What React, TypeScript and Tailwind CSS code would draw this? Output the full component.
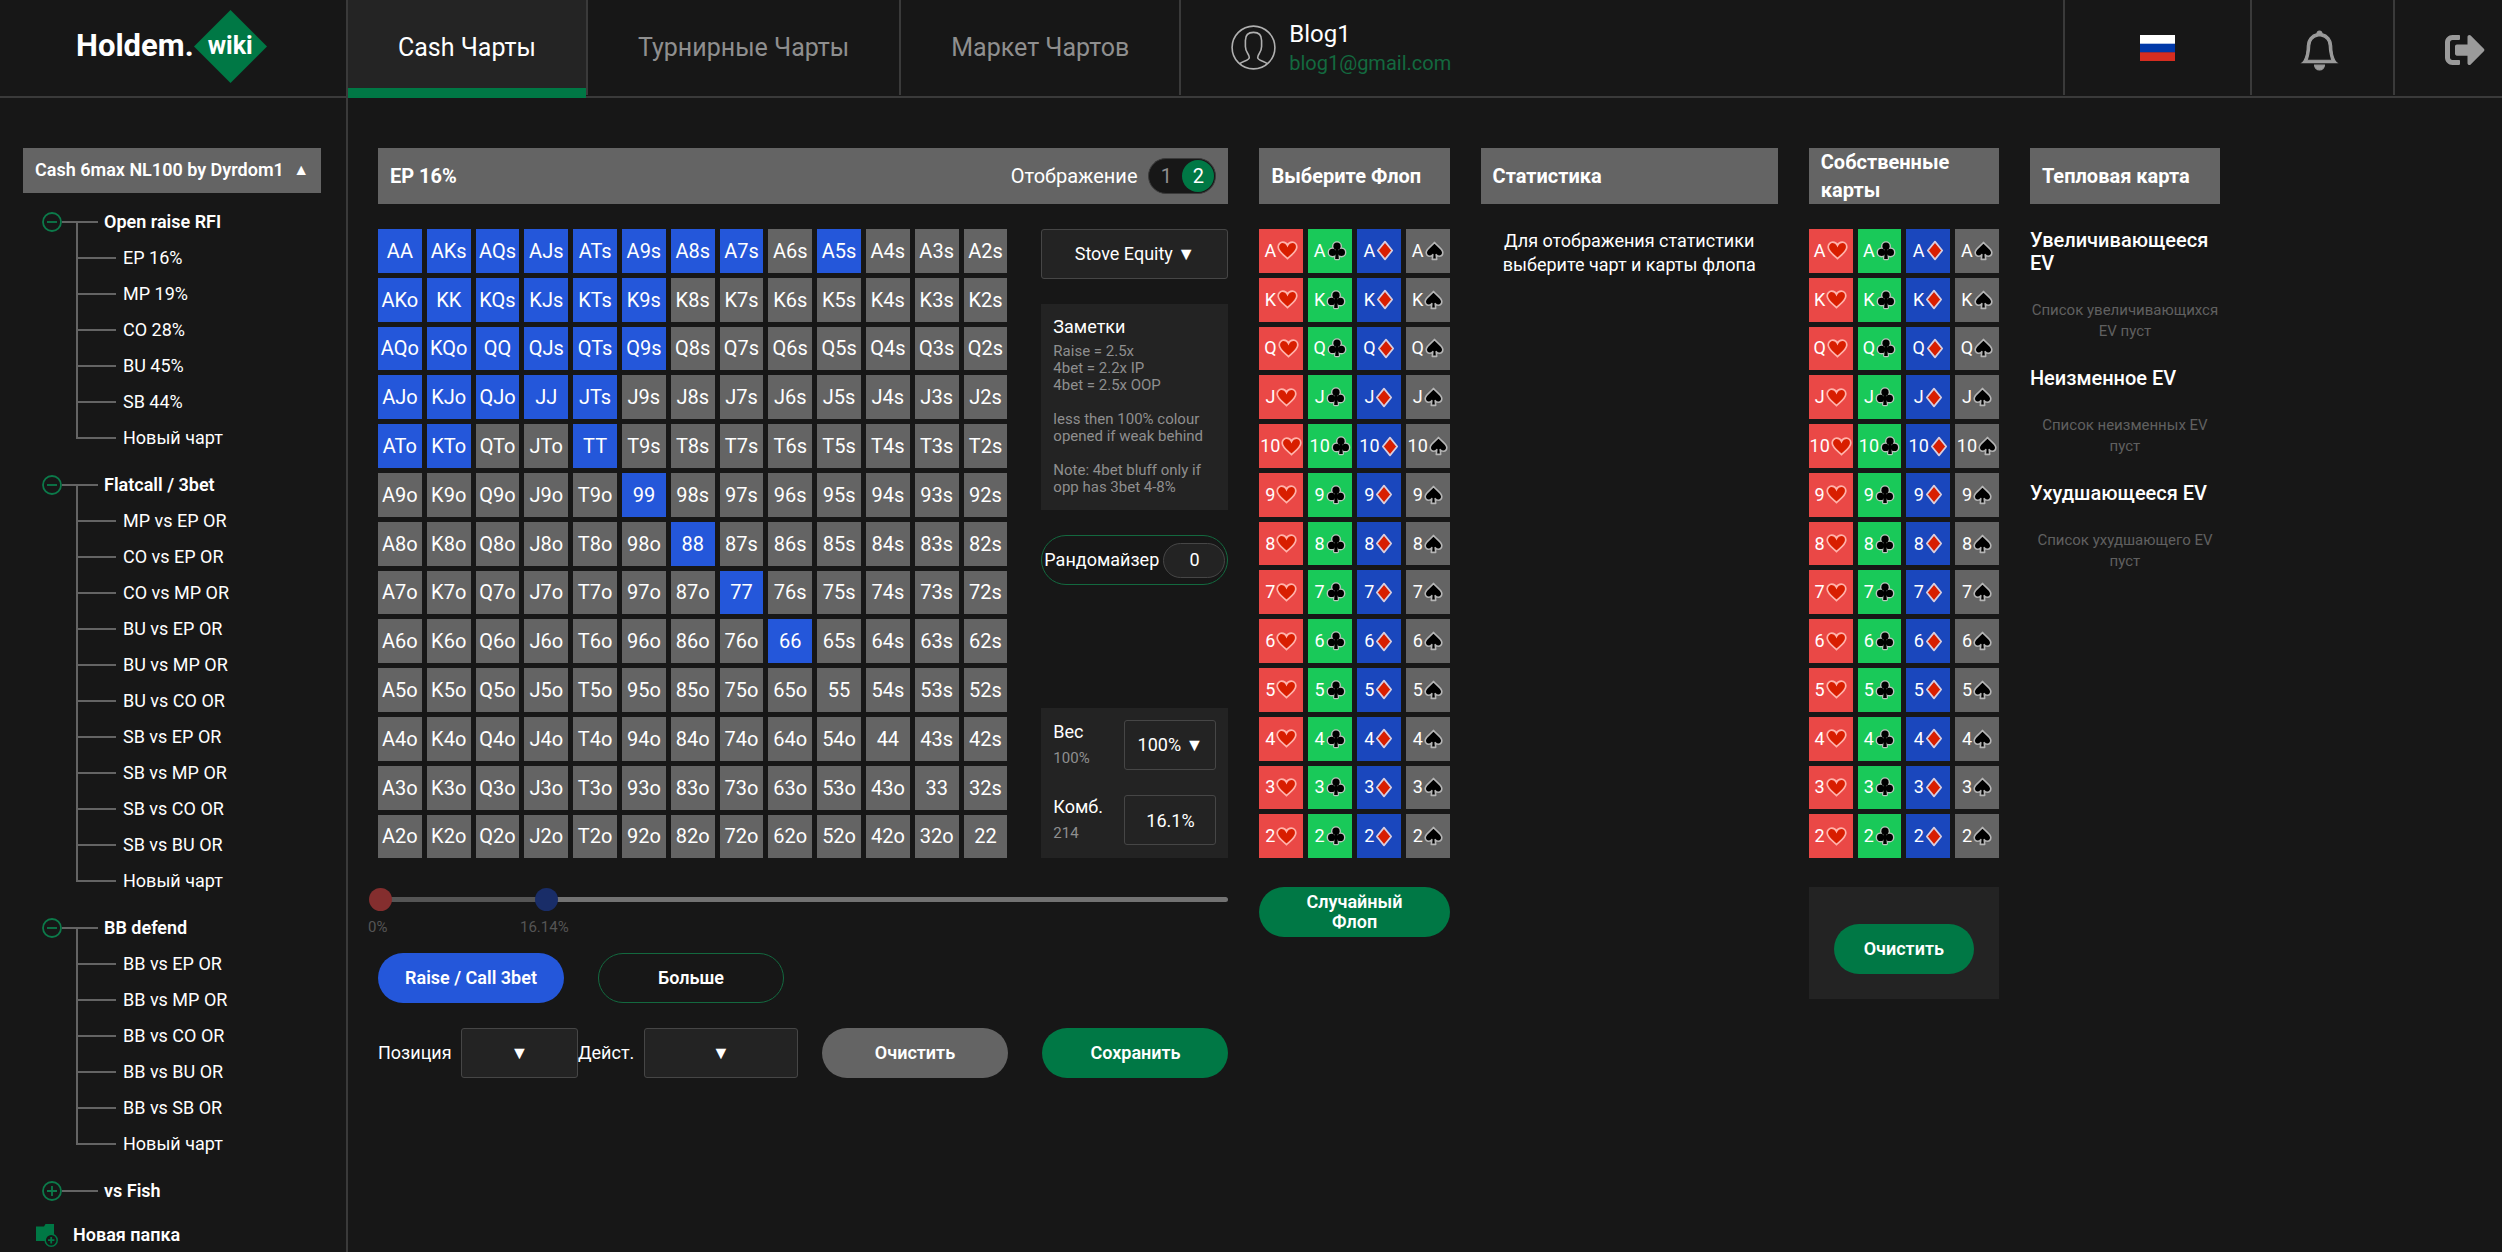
import { useState } from "react";
import { BsBell } from "react-icons/bs";
import { FaSignOutAlt } from "react-icons/fa";

const RANKS = ["A", "K", "Q", "J", "T", "9", "8", "7", "6", "5", "4", "3", "2"];

const RAISED = new Set([
  "AA", "AKs", "AQs", "AJs", "ATs", "A9s", "A8s", "A7s", "A5s",
  "AKo", "KK", "KQs", "KJs", "KTs", "K9s",
  "AQo", "KQo", "QQ", "QJs", "QTs", "Q9s",
  "AJo", "KJo", "QJo", "JJ", "JTs",
  "ATo", "KTo", "TT", "99", "88", "77", "66",
]);

const HANDS = RANKS.flatMap((_, row) =>
  RANKS.map((_, col) => {
    if (row === col) return RANKS[row] + RANKS[col];
    return row < col ? `${RANKS[row]}${RANKS[col]}s` : `${RANKS[col]}${RANKS[row]}o`;
  }),
);

const FOLDERS = [
  { name: "Open raise RFI", charts: ["EP 16%", "MP 19%", "CO 28%", "BU 45%", "SB 44%", "Новый чарт"] },
  {
    name: "Flatcall / 3bet",
    charts: [
      "MP vs EP OR", "CO vs EP OR", "CO vs MP OR", "BU vs EP OR", "BU vs MP OR", "BU vs CO OR",
      "SB vs EP OR", "SB vs MP OR", "SB vs CO OR", "SB vs BU OR", "Новый чарт",
    ],
  },
  {
    name: "BB defend",
    charts: ["BB vs EP OR", "BB vs MP OR", "BB vs CO OR", "BB vs BU OR", "BB vs SB OR", "Новый чарт"],
  },
  { name: "vs Fish", charts: [] as string[] },
];

function Heart() {
  return (
    <svg width="21" height="19" viewBox="0 0 21 19" aria-hidden="true">
      <path
        d="M10.5 17.6C8 15.2 1.2 10.6 1.2 6C1.2 3.2 3.2 1.2 5.7 1.2C7.9 1.2 9.7 2.5 10.5 4.4C11.3 2.5 13.1 1.2 15.3 1.2C17.8 1.2 19.8 3.2 19.8 6C19.8 10.6 13 15.2 10.5 17.6Z"
        fill="#d81e00"
        stroke="#ffb3ab"
        strokeWidth="1.7"
      />
    </svg>
  );
}

function Club() {
  return (
    <svg width="20" height="20" viewBox="0 0 20 20" aria-hidden="true">
      <g stroke="#b9c4bb" strokeWidth="3.2" strokeLinejoin="round" fill="#b9c4bb">
        <circle cx="10" cy="5.2" r="3.4" />
        <circle cx="5.6" cy="11.4" r="3.4" />
        <circle cx="14.4" cy="11.4" r="3.4" />
        <path d="M9 8h2l.4 9.6h-2.8z" />
      </g>
      <g fill="#000">
        <circle cx="10" cy="5.2" r="3.6" />
        <circle cx="5.6" cy="11.4" r="3.6" />
        <circle cx="14.4" cy="11.4" r="3.6" />
        <path d="M8.6 7h2.8v5l.4 6h-3.6l.4-6z" />
      </g>
    </svg>
  );
}

function Diamond() {
  return (
    <svg width="18" height="21" viewBox="0 0 18 21" aria-hidden="true">
      <path d="M9 1.6L16.2 10.5L9 19.4L1.8 10.5Z" fill="#d81e00" stroke="#d9cfe0" strokeWidth="1.7" strokeLinejoin="round" />
    </svg>
  );
}

function Spade() {
  return (
    <svg width="19" height="20" viewBox="0 0 19 20" aria-hidden="true">
      <path
        d="M9.5 1.4C11 4.2 17.8 7.6 17.8 11.6C17.8 13.8 16.2 15.2 14.4 15.2C13 15.2 11.9 14.6 11.2 13.6L11.7 18.4H7.3L7.8 13.6C7.1 14.6 6 15.2 4.6 15.2C2.8 15.2 1.2 13.8 1.2 11.6C1.2 7.6 8 4.2 9.5 1.4Z"
        fill="#000"
        stroke="#b5b5b5"
        strokeWidth="1.6"
        strokeLinejoin="round"
      />
    </svg>
  );
}

const SUITS = [
  { name: "червы", Icon: Heart, color: "bg-[#ea4846]" },
  { name: "трефы", Icon: Club, color: "bg-[#19c959]" },
  { name: "бубны", Icon: Diamond, color: "bg-[#1a47bd]" },
  { name: "пики", Icon: Spade, color: "bg-[#646464]" },
];

function CardPicker({ label }: { label: string }) {
  return (
    <div role="group" aria-label={label} className="grid grid-cols-4 gap-[5px]">
      {RANKS.map((r) => (r === "T" ? "10" : r)).flatMap((rank) =>
        SUITS.map(({ name, Icon, color }) => (
          <button
            key={rank + name}
            type="button"
            aria-label={`${rank} ${name}`}
            className={`flex aspect-square min-w-0 items-center justify-center gap-px text-lg ${color}`}
          >
            <span>{rank}</span>
            <span className="shrink-0">
              <Icon />
            </span>
          </button>
        )),
      )}
    </div>
  );
}

function PanelTitle({ children }: { children: React.ReactNode }) {
  return (
    <h2 className="flex h-14 items-center bg-[#646464] px-3 text-xl leading-7 font-bold">{children}</h2>
  );
}

function Avatar() {
  return (
    <svg width="45" height="45" viewBox="0 0 45 45" fill="none" stroke="#b0b0b0" strokeWidth="1.6" aria-hidden="true">
      <circle cx="22.5" cy="22.5" r="21.4" />
      <path d="M8.6 38.8C11.5 36.2 18.3 35.4 18.3 32.4C18.3 28.8 14.4 27.6 14.4 21.6V15.4C14.4 10.4 17.2 7.4 22.5 7.4C27.8 7.4 30.6 10.4 30.6 15.4V21.6C30.6 27.6 26.7 28.8 26.7 32.4C26.7 35.4 33.5 36.2 36.4 38.8" />
    </svg>
  );
}

function NavTab({ children, active = false }: { children: string; active?: boolean }) {
  return (
    <a
      href="#"
      aria-current={active ? "page" : undefined}
      className={
        active
          ? "relative flex items-center border-r-2 border-[#3a3a3a] bg-[#242424] px-[50px] text-[25px] after:absolute after:top-[88px] after:left-0 after:h-2.5 after:w-full after:bg-[#007845]"
          : "flex items-center border-r-2 border-[#3a3a3a] px-[50px] text-[25px] text-[#8f8f8f]"
      }
    >
      {children}
    </a>
  );
}

function Header() {
  return (
    <header className="flex h-[98px] items-start border-b-2 border-[#3a3a3a]">
      <div className="flex h-24 w-[348px] shrink-0 items-center border-r-2 border-[#3a3a3a] pl-[76px]">
        <a href="#" className="flex items-center pb-1 font-bold">
          <span className="text-[31px]">Holdem.</span>
          <span className="grid place-items-center">
            <svg width="73" height="73" viewBox="0 0 73 73" className="col-start-1 row-start-1" aria-hidden="true">
              <path d="M36.5 0L73 36.5L36.5 73L0 36.5Z" fill="#007845" />
            </svg>
            <span className="z-10 col-start-1 row-start-1 text-[25px]">wiki</span>
          </span>
        </a>
      </div>
      <nav className="flex h-[95px]">
        <NavTab active>Cash Чарты</NavTab>
        <NavTab>Турнирные Чарты</NavTab>
        <NavTab>Маркет Чартов</NavTab>
      </nav>
      <div className="flex h-[95px] items-center gap-[13px] pl-[50px]">
        <Avatar />
        <div>
          <p className="text-2xl leading-[30px]">Blog1</p>
          <p className="text-xl leading-7 text-[#13693f]">blog1@gmail.com</p>
        </div>
      </div>
      <div className="ml-auto flex h-[95px] text-[#9b9b9b]">
        <button type="button" aria-label="Язык: русский" className="flex w-[187px] items-center justify-center border-l-2 border-[#3a3a3a]">
          <svg width="35" height="26" viewBox="0 0 35 26" aria-hidden="true">
            <rect width="35" height="9" fill="#fff" />
            <rect y="8.7" width="35" height="9" fill="#0038a8" />
            <rect y="17.3" width="35" height="8.7" fill="#d62d20" />
          </svg>
        </button>
        <button type="button" aria-label="Уведомления" className="flex w-[143px] items-center justify-center border-l-2 border-[#3a3a3a] pt-1.5 pr-1.5">
          <BsBell size={39} stroke="currentColor" strokeWidth="0.5" className="overflow-visible" />
        </button>
        <button type="button" aria-label="Выйти" className="flex w-[109px] items-center border-l-2 border-[#3a3a3a] pt-1 pl-[50px]">
          <FaSignOutAlt size={40} />
        </button>
      </div>
    </header>
  );
}

function Folder({ name, charts }: { name: string; charts: string[] }) {
  const open = charts.length > 0;
  return (
    <li>
      <div className="flex h-[37px] items-center pl-[19px]">
        <button type="button" aria-label={open ? `Свернуть ${name}` : `Развернуть ${name}`} aria-expanded={open} className="text-[#0c7a4a]">
          <svg width="20" height="20" viewBox="0 0 20 20" fill="none" stroke="currentColor" strokeWidth="1.8" aria-hidden="true">
            <circle cx="10" cy="10" r="9" />
            <path d={open ? "M5 10H15" : "M5 10H15M10 5V15"} />
          </svg>
        </button>
        <span className="flex w-3.5 flex-col self-stretch">
          <span className="flex-1 border-b-2 border-[#646464]" />
          <span className="flex-1" />
        </span>
        <span className="flex w-[22px] flex-col self-stretch">
          <span className="flex-1 border-b-2 border-[#646464]" />
          <span className={open ? "flex-1 border-l-2 border-[#646464]" : "flex-1"} />
        </span>
        <span className="pl-1.5 text-lg font-semibold">{name}</span>
      </div>
      {open && (
        <ul className="pl-[53px]">
          {charts.map((chart, i) => (
            <li key={chart} className="flex h-9 items-center">
              <span className="flex w-10 flex-col self-stretch">
                <span className="flex-1 border-b-2 border-l-2 border-[#646464]" />
                <span className={i < charts.length - 1 ? "flex-1 border-l-2 border-[#646464]" : "flex-1"} />
              </span>
              <a href="#" className="pl-[7px] text-lg">
                {chart}
              </a>
            </li>
          ))}
        </ul>
      )}
    </li>
  );
}

function Sidebar() {
  return (
    <aside className="w-[348px] shrink-0 border-r-2 border-[#3a3a3a] pt-[50px] pr-[25px] pl-[23px]">
      <button type="button" className="flex h-[45px] w-full items-center justify-between bg-[#646464] px-3 pb-0.5 text-lg font-semibold">
        <span>Cash 6max NL100 by Dyrdom1</span>
        <span className="text-base">▲</span>
      </button>
      <ul className="mt-2.5 flex flex-col gap-2.5">
        {FOLDERS.map((folder) => (
          <Folder key={folder.name} {...folder} />
        ))}
      </ul>
      <button type="button" className="mt-2.5 flex h-8 items-center gap-[15px] pl-[13px] text-lg font-semibold">
        <svg width="22" height="23" viewBox="0 0 22 23" aria-hidden="true">
          <path d="M0 2.5H8L9.5 0H18V17H0Z" fill="#007845" />
          <circle cx="15.2" cy="16.2" r="6" fill="#171717" stroke="#007845" strokeWidth="1.5" />
          <path d="M12 16.2H18.4M15.2 13V19.4" stroke="#007845" strokeWidth="1.8" />
        </svg>
        <span>Новая папка</span>
      </button>
    </aside>
  );
}

function DisplaySwitch() {
  const [view, setView] = useState("2");
  return (
    <div role="radiogroup" aria-labelledby="view-label" className="flex items-center gap-[11px]">
      <span id="view-label" className="text-xl">Отображение</span>
      <span className="flex rounded-full border border-[#3a3a3a] bg-[#171717] p-px text-xl">
        {["1", "2"].map((v) => (
          <label
            key={v}
            className="relative flex size-8 items-center justify-center rounded-full text-[#8f8f8f] has-checked:bg-[#007845] has-checked:text-white"
          >
            <input type="radio" name="view" className="sr-only" checked={view === v} onChange={() => setView(v)} />
            {v}
          </label>
        ))}
      </span>
    </div>
  );
}

const SELECT =
  "h-[50px] appearance-none rounded-[3px] border border-[#464646] bg-[#232323] text-center text-lg [text-align-last:center]";

const RANGE =
  "pointer-events-none col-start-1 row-start-1 h-6 w-full appearance-none bg-transparent [&::-webkit-slider-thumb]:pointer-events-auto [&::-webkit-slider-thumb]:size-[23px] [&::-webkit-slider-thumb]:appearance-none [&::-webkit-slider-thumb]:rounded-full";

function EquitySlider() {
  const [low, setLow] = useState(0);
  const [high, setHigh] = useState(16.14);
  return (
    <div className="mt-[29px]">
      <div className="grid items-center">
        <div className="col-start-1 row-start-1 flex h-[5px] overflow-hidden rounded-full bg-[#737373]">
          <span className="w-1/5 bg-[#555555]" />
        </div>
        <div className="z-10 col-start-1 row-start-1 -mx-[9px] grid">
          <input
            type="range"
            aria-label="Нижняя граница"
            min={0}
            max={82}
            step="any"
            value={low}
            onChange={(e) => setLow(Number(e.target.value))}
            className={`${RANGE} [&::-webkit-slider-thumb]:bg-[#842e2e]`}
          />
          <input
            type="range"
            aria-label="Верхняя граница"
            min={0}
            max={82}
            step="any"
            value={high}
            onChange={(e) => setHigh(Number(e.target.value))}
            className={`${RANGE} [&::-webkit-slider-thumb]:bg-[#192d68]`}
          />
        </div>
      </div>
      <div className="-ml-2.5 flex h-[26px] items-end text-[15px] leading-5 text-[#555555]">
        <output className="w-[152px]">{Math.round(low)}%</output>
        <output>{high.toFixed(2)}%</output>
      </div>
    </div>
  );
}

function ChartPanel() {
  return (
    <section>
      <div className="flex h-14 items-center justify-between bg-[#646464] px-3">
        <h2 className="text-xl font-bold">EP 16%</h2>
        <DisplaySwitch />
      </div>
      <div className="mt-[25px] grid grid-cols-[629fr_187fr] gap-[34px]">
        <div className="grid grid-cols-13 gap-[5px]">
          {HANDS.map((hand) => (
            <button
              key={hand}
              type="button"
              className={
                RAISED.has(hand)
                  ? "aspect-square min-w-0 bg-[#2457da] text-xl"
                  : "aspect-square min-w-0 bg-[#646464] text-xl"
              }
            >
              {hand}
            </button>
          ))}
        </div>
        <div className="flex flex-col">
          <select aria-label="Эквити" className={SELECT}>
            <option>Stove Equity ▼</option>
          </select>
          <div className="mt-[25px] bg-[#232323] px-3 pt-[11px] pb-3.5">
            <h3 className="text-lg leading-6">Заметки</h3>
            <p className="mt-1 text-[15px] leading-[17px] whitespace-pre-line text-[#8f8f8f]">
              {"Raise = 2.5x\n4bet = 2.2x IP\n4bet = 2.5x OOP\n\nless then 100% colour opened if weak behind\n\nNote: 4bet bluff only if opp has 3bet 4-8%"}
            </p>
          </div>
          <button type="button" className="mt-[25px] flex h-[50px] items-center justify-between rounded-full border border-[#13693f] pr-0.5 pl-0.5 text-lg">
            <span>Рандомайзер</span>
            <span className="flex h-[35px] w-[62px] items-center justify-center rounded-full border border-[#464646] bg-[#232323]">0</span>
          </button>
          <div className="mt-auto grid grid-cols-[1fr_92px] gap-y-[25px] bg-[#232323] px-3 pt-3 pb-[13px]">
            <div>
              <label htmlFor="weight" className="block text-lg leading-6">Вес</label>
              <p className="mt-1 text-[15px] leading-5 text-[#8f8f8f]">100%</p>
            </div>
            <select id="weight" className={SELECT}>
              <option>100% ▼</option>
            </select>
            <div>
              <label htmlFor="combos" className="block text-lg leading-6">Комб.</label>
              <p className="mt-1 text-[15px] leading-5 text-[#8f8f8f]">214</p>
            </div>
            <input
              id="combos"
              defaultValue="16.1%"
              className="h-[50px] w-full rounded-[3px] border border-[#464646] bg-[#232323] text-center text-lg"
            />
          </div>
        </div>
      </div>
      <EquitySlider />
      <div className="mt-4 flex gap-[34px] text-lg font-semibold">
        <button type="button" className="h-[50px] w-[186px] rounded-full bg-[#2457da]">Raise / Call 3bet</button>
        <button type="button" className="h-[50px] w-[186px] rounded-full border border-[#13693f]">Больше</button>
      </div>
      <div className="mt-[25px] flex items-center text-lg">
        <label htmlFor="position" className="w-[83px]">Позиция</label>
        <select id="position" className={`${SELECT} w-[117px]`}>
          <option>▼</option>
        </select>
        <label htmlFor="action" className="w-[66px]">Дейст.</label>
        <select id="action" className={`${SELECT} w-[154px]`}>
          <option>▼</option>
        </select>
        <button type="button" className="ml-6 h-[50px] w-[186px] rounded-full bg-[#646464] font-semibold">Очистить</button>
        <button type="button" className="ml-auto h-[50px] w-[186px] rounded-full bg-[#007845] font-semibold">Сохранить</button>
      </div>
    </section>
  );
}

const HEAT = [
  { title: "Увеличивающееся EV", empty: "Список увеличивающихся EV пуст" },
  { title: "Неизменное EV", empty: "Список неизменных EV пуст" },
  { title: "Ухудшающееся EV", empty: "Список ухудшающего EV пуст" },
];

export default function App() {
  return (
    <div className="flex min-h-screen flex-col bg-[#171717] font-[Roboto,sans-serif] text-white">
      <Header />
      <div className="flex flex-1">
        <Sidebar />
        <main className="grid w-full max-w-[1872px] grid-cols-[850fr_190fr_297fr_190fr_190fr] items-start gap-x-[31px] pt-[50px] pl-[30px]">
          <ChartPanel />
          <section>
            <PanelTitle>Выберите Флоп</PanelTitle>
            <div className="mt-[25px]">
              <CardPicker label="Карты флопа" />
            </div>
            <button type="button" className="mt-[29px] h-[50px] w-full rounded-full bg-[#007845] px-10 text-lg leading-5 font-semibold">
              Случайный Флоп
            </button>
          </section>
          <section>
            <PanelTitle>Статистика</PanelTitle>
            <p className="mt-[25px] px-5 text-center text-lg leading-6">
              Для отображения статистики выберите чарт и карты флопа
            </p>
          </section>
          <section>
            <PanelTitle>Собственные карты</PanelTitle>
            <div className="mt-[25px]">
              <CardPicker label="Собственные карты" />
            </div>
            <div className="mt-[29px] bg-[#232323] px-[25px] pt-[37px] pb-[25px]">
              <button type="button" className="h-[50px] w-full rounded-full bg-[#007845] text-lg font-semibold">
                Очистить
              </button>
            </div>
          </section>
          <section>
            <PanelTitle>Тепловая карта</PanelTitle>
            <div className="mt-[25px] flex flex-col gap-[25px]">
              {HEAT.map(({ title, empty }) => (
                <div key={title}>
                  <h3 className="text-xl leading-[23px] font-medium">{title}</h3>
                  <p className="mt-[25px] text-center text-[15px] leading-[21px] text-[#606060]">{empty}</p>
                </div>
              ))}
            </div>
          </section>
        </main>
      </div>
    </div>
  );
}
